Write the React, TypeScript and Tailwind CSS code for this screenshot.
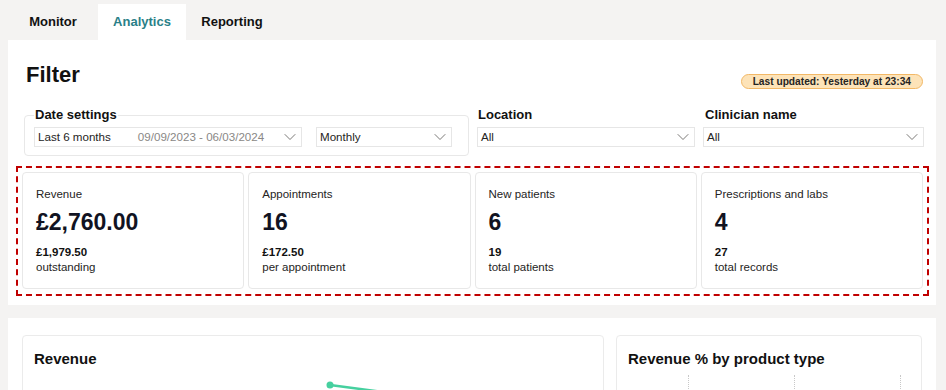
import { ChevronDown } from "lucide-react";

type StatCardProps = {
  label: string;
  value: string;
  sub: string;
  note: string;
};

function StatCard({ label, value, sub, note }: StatCardProps) {
  return (
    <div className="flex-1 bg-white border border-[#e8e8e8] rounded-[4px] pl-[13px] pt-[13px] h-[117px]">
      <p className="text-[11.5px] leading-[16px] text-[#252423]">{label}</p>
      <p className="mt-[6px] text-[23px] leading-[28px] font-bold text-[#111322]">{value}</p>
      <p className="mt-[9px] text-[11.5px] leading-[15px] font-bold text-[#111]">{sub}</p>
      <p className="text-[11.5px] leading-[15px] text-[#252423]">{note}</p>
    </div>
  );
}

function Select({
  text,
  hint,
  className = "",
}: {
  text: string;
  hint?: string;
  className?: string;
}) {
  return (
    <div
      className={`h-[20px] flex items-center border border-[#e6e6e6] bg-white pl-[3px] pr-[1px] text-[11.6px] text-[#252423] ${className}`}
    >
      <span>{text}</span>
      {hint && <span className="ml-[27px] text-[#8a8886]">{hint}</span>}
      <ChevronDown className="ml-auto text-[#605e5c]" size={20} strokeWidth={1} />
    </div>
  );
}

export default function App() {
  const stats: StatCardProps[] = [
    { label: "Revenue", value: "£2,760.00", sub: "£1,979.50", note: "outstanding" },
    { label: "Appointments", value: "16", sub: "£172.50", note: "per appointment" },
    { label: "New patients", value: "6", sub: "19", note: "total patients" },
    { label: "Prescriptions and labs", value: "4", sub: "27", note: "total records" },
  ];

  return (
    <div className="w-[946px] h-[390px] overflow-hidden bg-[#f4f3f2] font-['Liberation_Sans',Arial,sans-serif]">
      {/* Tabs */}
      <div className="flex h-[40px] items-end pl-[8px]">
        <div className="w-[90px] h-[36px] flex items-center justify-center text-[13px] font-bold text-[#111]">
          Monitor
        </div>
        <div className="w-[88px] h-[36px] flex items-center justify-center bg-white text-[13px] font-bold text-[#2a7f88]">
          Analytics
        </div>
        <div className="w-[92px] h-[36px] flex items-center justify-center text-[13px] font-bold text-[#111]">
          Reporting
        </div>
      </div>

      {/* Filter panel */}
      <div className="ml-[8px] w-[928px] bg-white pt-[23px] pb-[9px]">
        <div className="flex items-start pl-[18px] pr-[13px]">
          <h1 className="text-[22px] leading-[24px] font-bold text-[#111]">Filter</h1>
          <span className="ml-auto mt-[11px] h-[15px] flex items-center rounded-full border border-[#f2b866] bg-[#fde3b8] px-[11px] text-[10.2px] font-bold text-[#252423]">
            Last updated: Yesterday at 23:34
          </span>
        </div>

        <div className="flex items-start mt-[18px] pl-[16px]">
          <fieldset className="w-[445px] mt-[1px] border border-[#e8e8e8] rounded-[4px] px-[9px] pb-[8px]">
            <legend className="px-[1px] text-[13px] font-bold text-[#111] leading-[14px]">
              Date settings
            </legend>
            <div className="flex gap-[14px] mt-[5px]">
              <Select className="w-[268px]" text="Last 6 months" hint="09/09/2023 - 06/03/2024" />
              <Select className="w-[136px]" text="Monthly" />
            </div>
          </fieldset>
          <div className="ml-[8px] w-[218px]">
            <p className="text-[13px] font-bold text-[#111] leading-[16px] pl-[1px]">Location</p>
            <Select className="mt-[4px]" text="All" />
          </div>
          <div className="ml-[8px] w-[221px]">
            <p className="text-[13px] font-bold text-[#111] leading-[16px] pl-[2px]">Clinician name</p>
            <Select className="mt-[4px]" text="All" />
          </div>
        </div>

        <div className="mt-[10px] ml-[8px] w-[913px] border-2 border-dashed border-[#c00000] pt-[4px] pb-[5px] px-[4px]">
          <div className="flex gap-[4px]">
            {stats.map((s) => (
              <StatCard key={s.label} {...s} />
            ))}
          </div>
        </div>
      </div>

      {/* Charts panel */}
      <div className="mt-[13px] ml-[8px] w-[928px] h-[120px] bg-white pt-[17px] px-[14px] flex gap-[12px]">
        <div className="w-[582px] h-[100px] border border-[#ebebeb] rounded-[4px] pt-[14px] pl-[11px] relative">
          <h2 className="text-[15px] leading-[18px] font-bold text-[#111]">Revenue</h2>
          <svg className="absolute left-[300px] top-[40px]" width="80" height="20">
            <line x1="7" y1="9" x2="60" y2="16" stroke="#46d09f" strokeWidth="2.5" />
            <circle cx="7" cy="9" r="3.5" fill="#46d09f" />
          </svg>
        </div>
        <div className="w-[306px] h-[100px] border border-[#ebebeb] rounded-[4px] pt-[14px] pl-[11px] relative">
          <h2 className="text-[15px] leading-[18px] font-bold text-[#111]">Revenue % by product type</h2>
          <div className="absolute left-[71px] top-[39px] h-[40px] border-l border-dotted border-[#c8c8c8]" />
          <div className="absolute left-[177px] top-[39px] h-[40px] border-l border-dotted border-[#c8c8c8]" />
          <div className="absolute left-[283px] top-[39px] h-[40px] border-l border-dotted border-[#c8c8c8]" />
        </div>
      </div>
    </div>
  );
}
